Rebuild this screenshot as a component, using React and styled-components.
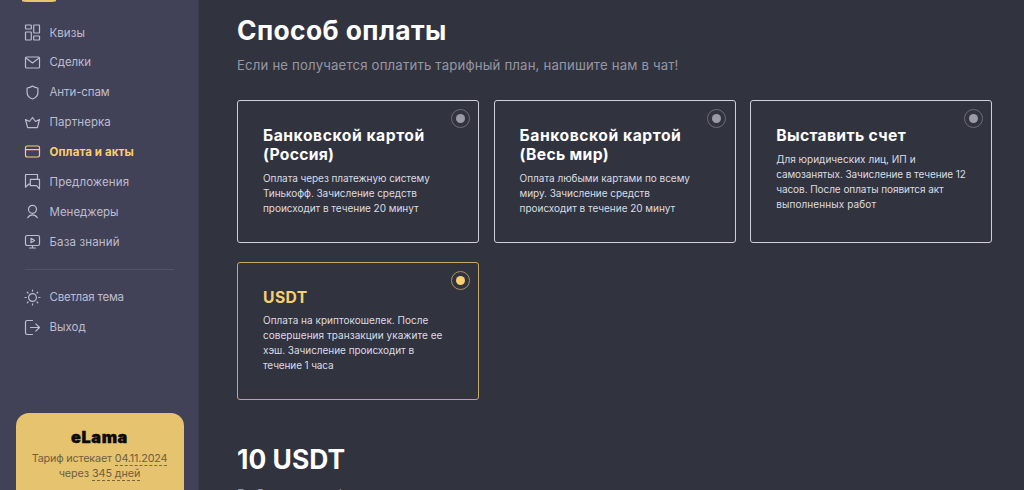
import React from 'react'
import styled, { createGlobalStyle } from 'styled-components'

const GlobalStyle = createGlobalStyle`
	* {
		box-sizing: border-box;
	}
	body {
		margin: 0;
		background-color: #31333f;
		font-family: 'Inter', 'Open Sans', sans-serif;
	}
`

const Page = styled.div`
	display: flex;
	width: 100%;
	height: 490px;
	overflow: hidden;
	background-color: #31333f;
`

const Sidebar = styled.aside`
	display: flex;
	flex-direction: column;
	flex: none;
	width: 199px;
	height: 490px;
	background-color: #414158;
	border-right: 1px solid #3b3b4f;
`

const LogoBadge = styled.div`
	flex: none;
	width: 34px;
	height: 1.5px;
	margin-left: 22px;
	background-color: #e8c670;
	border-radius: 0 0 8px 8px / 0 0 1px 1px;
`

const Menu = styled.nav`
	display: flex;
	flex-direction: column;
	flex: none;
	padding: ${(props) => props.$padding};
`

const MenuLink = styled.a`
	display: flex;
	align-items: center;
	gap: 8.5px;
	height: 29.85px;
	padding-left: 24px;
	color: ${(props) => (props.$active ? '#f8d06f' : '#bdbdcd')};
	font-size: 11.5px;
	font-weight: ${(props) => (props.$active ? 700 : 400)};
	letter-spacing: ${(props) => props.$tracking}px;
	white-space: nowrap;
	cursor: pointer;
	svg {
		flex: none;
		width: 17px;
		height: 17px;
		fill: none;
		stroke: currentColor;
		stroke-width: 1.2;
		stroke-linejoin: round;
		stroke-linecap: round;
	}
`

const Divider = styled.hr`
	flex: none;
	width: 149px;
	height: 1px;
	margin: 12.5px 0 0 25px;
	border: none;
	background-color: #525363;
`

const TariffCard = styled.div`
	flex: none;
	width: 168px;
	height: 100px;
	margin: 71px 0 0 15.5px;
	padding-top: 13px;
	border-radius: 13px;
	background-color: #e6c36e;
	text-align: center;
`

const TariffName = styled.div`
	margin-bottom: 4px;
	color: #0b0a08;
	font-size: 16.3px;
	font-weight: 900;
	line-height: 22px;
	letter-spacing: 0.6px;
	-webkit-text-stroke: 0.4px #0b0a08;
`

const TariffLine = styled.div`
	color: #6f6040;
	font-size: 10.8px;
	line-height: 14.4px;
	letter-spacing: ${(props) => props.$tracking}px;
	white-space: nowrap;
	span {
		display: inline-block;
		height: 14px;
		vertical-align: top;
		border-bottom: 1px dashed #79683f;
	}
`

const Content = styled.main`
	flex: 1;
	padding: 12px 31px 0 38px;
`

const Title = styled.h1`
	margin: 0;
	color: #ffffff;
	font-size: 26.4px;
	font-weight: 700;
	line-height: 37px;
	letter-spacing: ${(props) => props.$tracking}px;
`

const Hint = styled.p`
	margin: 7px 0 0;
	color: #9697a3;
	font-size: 13.2px;
	line-height: 18px;
	letter-spacing: 0.17px;
`

const Methods = styled.div`
	display: grid;
	grid-template-columns: repeat(3, 242px);
	grid-template-rows: 142.600px 138.400px;
	gap: 19px 14.600px;
	margin: 26px 0 41px;
`

const MethodCard = styled.div`
	position: relative;
	padding: 25px 0 0 25px;
	border: 1px solid ${(props) => (props.$active ? '#c6aa65' : '#cfd0d8')};
	border-radius: 3px;
	cursor: pointer;
`

const MethodLine = styled.div`
	font-size: 15.7px;
	font-weight: 700;
	line-height: 19px;
	color: ${(props) => (props.$active ? '#f8d06f' : '#ffffff')};
	letter-spacing: ${(props) => props.$tracking}px;
	white-space: nowrap;
`

const MethodText = styled.div`
	margin-top: ${(props) => (props.$active ? 6 : 6.6)}px;
`

const TextLine = styled.div`
	color: #dcdce2;
	font-size: 10px;
	line-height: 15.2px;
	letter-spacing: ${(props) => props.$tracking}px;
	white-space: nowrap;
`

const Radio = styled.span`
	position: absolute;
	top: 8px;
	right: 8.5px;
	display: flex;
	align-items: center;
	justify-content: center;
	width: 19px;
	height: 19px;
	border: 1px solid ${(props) => (props.$active ? '#a8935d' : '#6b6c78')};
	border-radius: 50%;
	&::after {
		content: '';
		width: 9px;
		height: 9px;
		border-radius: 50%;
		background-color: ${(props) => (props.$active ? '#fbd071' : '#9a9ba7')};
	}
`

const icons = {
	quiz: (
		<>
			<rect x='1.5' y='1' width='5.8' height='4' rx='0.5' />
			<rect x='9.7' y='1' width='5.8' height='8' rx='0.5' />
			<rect x='1.5' y='8' width='5.8' height='8' rx='0.5' />
			<rect x='9.7' y='12' width='5.8' height='4' rx='0.5' />
		</>
	),
	mail: (
		<>
			<rect x='1.5' y='3' width='14' height='11' rx='1' />
			<path d='M2 4l6.5 5L15 4' />
		</>
	),
	shield: <path d='M8.5 2c1.7 1.3 3.4 1.9 5.4 2v4.4c0 3-2 5.2-5.4 6.6-3.4-1.4-5.4-3.6-5.4-6.6V4c2-.1 3.7-.7 5.4-2z' />,
	crown: <path d='M3.6 13.7L1.5 5.5l4 2 3-4 3 4 4-2-2.100 8.200z' />,
	card: (
		<>
			<rect x='1.5' y='3' width='14' height='11' rx='1.7' />
			<path d='M1.5 6.7h14' />
		</>
	),
	chat: (
		<>
			<path d='M6.3 11.2H4.6L1.5 14.2V1.5h12v4.3' />
			<path d='M6.3 6.3h9.2v9.5l-3-3.100H6.300z' />
		</>
	),
	user: (
		<>
			<circle cx='8.5' cy='6.3' r='4' />
			<path d='M3.7 14.700c1.200-2 2.800-2.900 4.800-2.900s3.600.9 4.800 2.900' />
		</>
	),
	video: (
		<>
			<path d='M4.7 12.5H3.2c-1 0-1.700-.7-1.700-1.700V4.200c0-1 .7-1.700 1.700-1.700h10.600c1 0 1.700.7 1.700 1.700v6.600c0 1-.7 1.700-1.700 1.700H4.700M8.500 12.700v2.200M5.500 15h6' />
			<path d='M7 5.300v4.400l3.600-2.200z' />
		</>
	),
	sun: (
		<>
			<circle cx='8.5' cy='8.5' r='3.9' />
			<path d='M8.5 1v1.200M8.500 14.800V16M1 8.500h1.200M14.800 8.500H16M3.200 3.200l.8.8M13 13l.8.8M3.200 13.800l.8-.8M13 4l.8-.8' />
		</>
	),
	exit: (
		<>
			<path d='M8.5 1.500H3.200c-1 0-1.700.7-1.700 1.700v10.600c0 1 .7 1.700 1.700 1.700h5.300' />
			<path d='M6.5 8.500h9M11.800 4.800l3.700 3.700-3.700 3.700' />
		</>
	),
}

const mainLinks = [
	{ icon: 'quiz', label: 'Квизы', tracking: 0.06 },
	{ icon: 'mail', label: 'Сделки', tracking: -0.08 },
	{ icon: 'shield', label: 'Анти-спам', tracking: -0.11 },
	{ icon: 'crown', label: 'Партнерка', tracking: 0.05 },
	{ icon: 'card', label: 'Оплата и акты', tracking: 0.1, active: true },
	{ icon: 'chat', label: 'Предложения', tracking: 0.1 },
	{ icon: 'user', label: 'Менеджеры', tracking: 0 },
	{ icon: 'video', label: 'База знаний', tracking: 0.14 },
]

const extraLinks = [
	{ icon: 'sun', label: 'Светлая тема', tracking: -0.21 },
	{ icon: 'exit', label: 'Выход', tracking: 0 },
]

// every line carries its own letter spacing: [text, tracking]
const methods = [
	{
		id: 'card-ru',
		title: [['Банковской картой', 0.53], ['(Россия)', 0.27]],
		text: [
			['Оплата через платежную систему', -0.06],
			['Тинькофф. Зачисление средств', -0.05],
			['происходит в течение 20 минут', -0.03],
		],
	},
	{
		id: 'card-world',
		title: [['Банковской картой', 0.53], ['(Весь мир)', 0.31]],
		text: [
			['Оплата любыми картами по всему', -0.02],
			['миру. Зачисление средств', -0.06],
			['происходит в течение 20 минут', -0.03],
		],
	},
	{
		id: 'invoice',
		title: [['Выставить счет', 0.33]],
		text: [
			['Для юридических лиц, ИП и', 0.02],
			['самозанятых. Зачисление в течение 12', -0.09],
			['часов. После оплаты появится акт', -0.06],
			['выполненных работ', 0.1],
		],
	},
	{
		id: 'usdt',
		active: true,
		title: [['USDT', 0.4]],
		text: [
			['Оплата на криптокошелек. После', 0.02],
			['совершения транзакции укажите ее', 0.04],
			['хэш. Зачисление происходит в', -0.04],
			['течение 1 часа', -0.12],
		],
	},
]

function MenuItem({ icon, label, tracking, active }) {
	return (
		<MenuLink $active={active} $tracking={tracking}>
			<svg viewBox='0 0 17 17'>{icons[icon]}</svg>
			{label}
		</MenuLink>
	)
}

function Method({ title, text, active }) {
	return (
		<MethodCard $active={active}>
			<Radio $active={active} />
			{title.map(([line, tracking]) => (
				<MethodLine key={line} $active={active} $tracking={tracking}>
					{line}
				</MethodLine>
			))}
			<MethodText $active={active}>
				{text.map(([line, tracking]) => (
					<TextLine key={line} $tracking={tracking}>
						{line}
					</TextLine>
				))}
			</MethodText>
		</MethodCard>
	)
}

export default function App() {
	return (
		<>
			<GlobalStyle />
			<Page>
				<Sidebar>
					<LogoBadge />
					<Menu $padding='16.2px 0 0'>
						{mainLinks.map((link) => (
							<MenuItem key={link.label} {...link} />
						))}
					</Menu>
					<Divider />
					<Menu $padding='12.5px 0 0'>
						{extraLinks.map((link) => (
							<MenuItem key={link.label} {...link} />
						))}
					</Menu>
					<TariffCard>
						<TariffName>eLama</TariffName>
						<TariffLine $tracking={-0.17}>
							Тариф истекает <span>04.11.2024</span>
						</TariffLine>
						<TariffLine $tracking={-0.1}>
							через <span>345 дней</span>
						</TariffLine>
					</TariffCard>
				</Sidebar>

				<Content>
					<Title $tracking={0.4}>Способ оплаты</Title>
					<Hint>Если не получается оплатить тарифный план, напишите нам в чат!</Hint>
					<Methods>
						{methods.map((method) => (
							<Method key={method.id} {...method} />
						))}
					</Methods>
					<Title $tracking={0.05}>10 USDT</Title>
					<Hint>Выберите тариф</Hint>
				</Content>
			</Page>
		</>
	)
}
